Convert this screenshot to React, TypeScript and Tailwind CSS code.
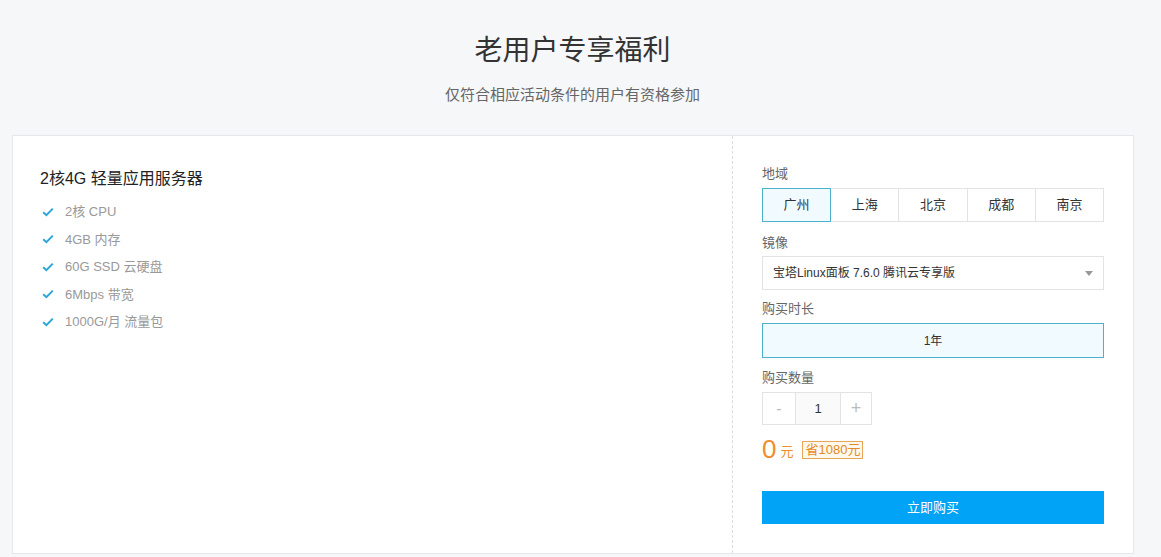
import { useState } from "react"

const features = ["2核 CPU", "4GB 内存", "60G SSD 云硬盘", "6Mbps 带宽", "1000G/月 流量包"]
const regions = ["广州", "上海", "北京", "成都", "南京"]

const Check = () => (
  <svg width="12" height="10" viewBox="0 0 12 10" className="shrink-0">
    <path d="M1.2 5.2 L4.4 8.2 L10.8 1.6" fill="none" stroke="#2aa7d8" strokeWidth="2" />
  </svg>
)

export default function App() {
  const [region, setRegion] = useState("广州")
  const [count, setCount] = useState(1)

  return (
    <div
      className="w-[1161px] h-[557px] bg-[#f6f7f9] overflow-hidden"
      style={{ fontFamily: '"Liberation Sans", "Noto Sans CJK SC", sans-serif' }}
    >
      <div className="w-[1145px]">
        <div className="pt-[33px] text-center">
          <h1 className="text-[28px] leading-[36px] text-[#333]">老用户专享福利</h1>
          <p className="mt-[16px] text-[15px] leading-[20px] text-[#666]">仅符合相应活动条件的用户有资格参加</p>
        </div>

        <div className="ml-[12px] mt-[30px] w-[1122px] h-[419px] bg-white border border-[#e5e7eb] flex">
          <div className="flex-1 border-r border-dashed border-[#dcdcdc] pl-[27px] pt-[32px]">
            <h2 className="text-[16px] leading-[22px] text-[#222]">2核4G 轻量应用服务器</h2>
            <ul className="mt-[8px]">
              {features.map((f) => (
                <li key={f} className="flex items-center gap-[11px] h-[27.5px] pl-[2px] text-[13px] text-[#999]">
                  <Check />
                  <span>{f}</span>
                </li>
              ))}
            </ul>
          </div>

          <div className="w-[400px] pl-[29px] pr-[29px] pt-[29px] text-[13px] text-[#666]">
            <div className="leading-[18px]">地域</div>
            <div className="mt-[5px] flex h-[34px]">
              {regions.map((r, i) => (
                <button
                  key={r}
                  onClick={() => setRegion(r)}
                  className={
                    "flex-1 text-[13px] text-[#333] border " +
                    (region === r
                      ? "bg-[#f0faff] border-[#4db0cc] relative z-10"
                      : "border-[#e3e3e3] bg-white") +
                    (i > 0 ? " -ml-px" : "")
                  }
                >
                  {r}
                </button>
              ))}
            </div>

            <div className="mt-[12px] leading-[18px]">镜像</div>
            <div className="mt-[4px] h-[34px] border border-[#e3e3e3] flex items-center justify-between pl-[10px] pr-[10px] text-[#333] text-[12px]">
              <span>宝塔Linux面板 7.6.0 腾讯云专享版</span>
              <svg width="8" height="5" viewBox="0 0 8 5">
                <path d="M0 0 L8 0 L4 5 Z" fill="#999" />
              </svg>
            </div>

            <div className="mt-[10px] leading-[18px]">购买时长</div>
            <div className="mt-[5px] h-[35px] bg-[#f0faff] border border-[#4db0cc] flex items-center justify-center text-[#333] text-[12px]">
              1年
            </div>

            <div className="mt-[11px] leading-[18px]">购买数量</div>
            <div className="mt-[5px] flex h-[33px] w-[110px] border border-[#e3e3e3]">
              <button
                onClick={() => setCount(Math.max(1, count - 1))}
                className="w-[33px] text-[#bbb] text-[16px] border-r border-[#e3e3e3]"
              >
                -
              </button>
              <div className="w-[44px] bg-[#fafafa] flex items-center justify-center text-[#333]">{count}</div>
              <button
                onClick={() => setCount(count + 1)}
                className="flex-1 text-[#bbb] text-[18px] border-l border-[#e3e3e3]"
              >
                +
              </button>
            </div>

            <div className="mt-[7px] flex items-end h-[32px]">
              <span className="text-[26px] leading-[30px] text-[#f08d2e]">0</span>
              <span className="ml-[4px] mb-[3px] text-[13px] text-[#f08d2e]">元</span>
              <span className="ml-[9px] mb-[5px] px-[2px] h-[18px] leading-[16px] border border-[#e9a659] bg-[#fff8ec] text-[13px] text-[#e38a26]">
                省1080元
              </span>
            </div>

            <button className="mt-[27px] w-full h-[33px] bg-[#00a3f5] text-white text-[13px]">立即购买</button>
          </div>
        </div>
      </div>
    </div>
  )
}
